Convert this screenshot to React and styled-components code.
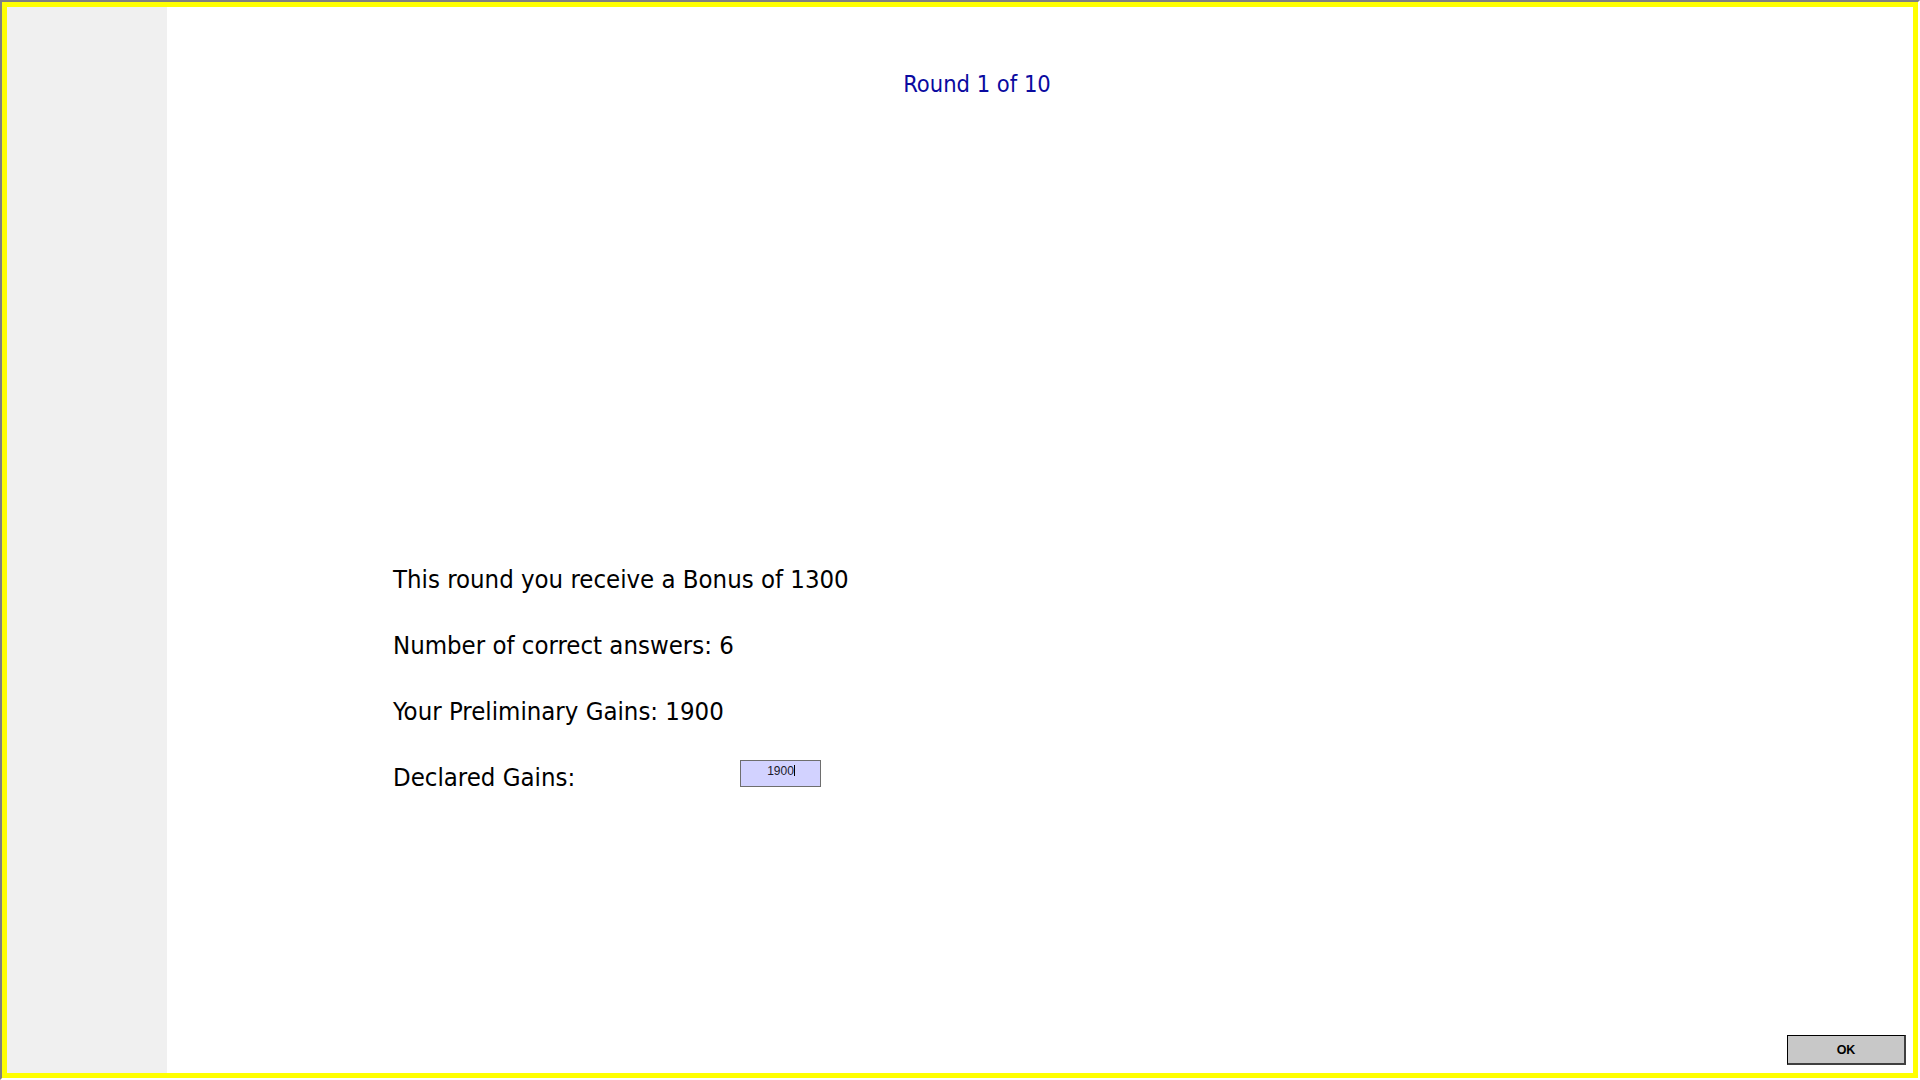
import React from "react";
import styled, { createGlobalStyle } from "styled-components";

const GlobalStyle = createGlobalStyle`
  html, body {
    margin: 0;
    padding: 0;
    background: #ffffff;
  }
  * {
    box-sizing: border-box;
  }
`;

const Screen = styled.div`
  width: 1920px;
  height: 1080px;
  border-style: solid;
  border-width: 2px;
  border-color: #808080 #ffffff #ffffff #808080;
  overflow: hidden;
`;

const Frame = styled.div`
  height: 100%;
  border: 5px solid #ffff00;
  display: flex;
`;

const Sidebar = styled.div`
  width: 160px;
  flex-shrink: 0;
  background: #f0f0f0;
`;

const Main = styled.div`
  flex: 1;
  display: flex;
  flex-direction: column;
  background: #ffffff;
  font-family: "DejaVu Sans Condensed", "DejaVu Sans", sans-serif;
`;

const Title = styled.div`
  padding: 62px 126px 0 0;
  text-align: center;
  font-size: 23.5px;
  line-height: 30px;
  color: #0a0aa0;
`;

const Results = styled.div`
  margin-top: 465px;
  padding-left: 226px;
  display: flex;
  flex-direction: column;
  gap: 36px;
`;

const Line = styled.div`
  display: flex;
  align-items: flex-start;
  font-size: 25.5px;
  line-height: 30px;
  color: #000000;
`;

const Label = styled.span`
  width: 347px;
`;

const Field = styled.div`
  position: relative;
  margin-top: -2px;
`;

const GainsInput = styled.input`
  display: block;
  width: 81px;
  height: 27px;
  margin: 0;
  padding: 3px 0 9px 0;
  border: 1px solid #6e6e6e;
  background: #d2d2ff;
  font-family: "Liberation Sans", Arial, sans-serif;
  font-size: 12px;
  color: #1a1a2a;
  text-align: center;
  outline: none;
`;

const Caret = styled.span`
  position: absolute;
  left: 54px;
  top: 5px;
  width: 1px;
  height: 11px;
  background: #000000;
`;

const Footer = styled.div`
  margin-top: auto;
  display: flex;
  justify-content: flex-end;
  padding: 0 7px 8px 0;
`;

const OkButton = styled.button`
  width: 119px;
  height: 30px;
  background: #c8c8c8;
  border-style: solid;
  border-width: 1px 2px 2px 1px;
  border-color: #000000 #404040 #404040 #000000;
  font-family: "Liberation Sans", Arial, sans-serif;
  font-size: 12.5px;
  font-weight: 700;
  color: #000000;
  padding: 0;
`;

export default function App() {
  return (
    <>
      <GlobalStyle />
      <Screen>
        <Frame>
          <Sidebar />
          <Main>
            <Title>Round 1 of 10</Title>
            <Results>
              <Line>This round you receive a Bonus of 1300</Line>
              <Line>Number of correct answers: 6</Line>
              <Line>Your Preliminary Gains: 1900</Line>
              <Line>
                <Label>Declared Gains:</Label>
                <Field>
                  <GainsInput defaultValue="1900" />
                  <Caret />
                </Field>
              </Line>
            </Results>
            <Footer>
              <OkButton>OK</OkButton>
            </Footer>
          </Main>
        </Frame>
      </Screen>
    </>
  );
}
